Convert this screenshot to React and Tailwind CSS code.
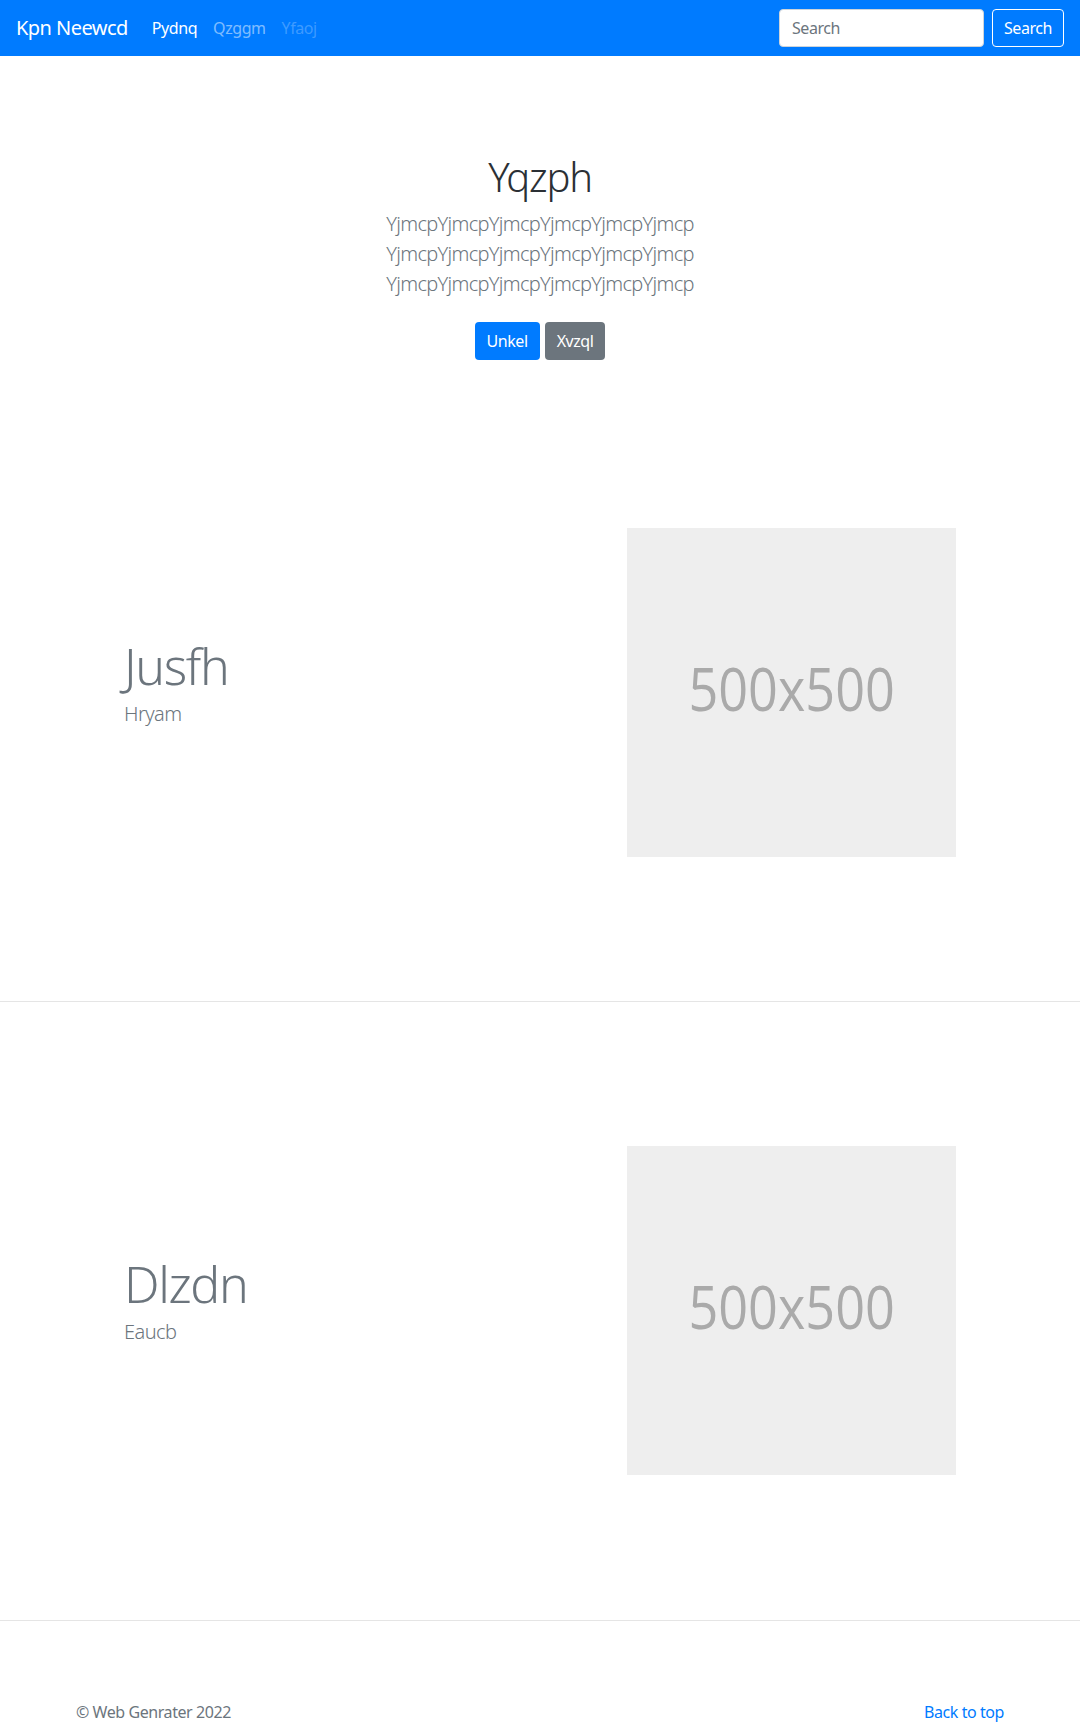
export default function App() {
  const font = { fontFamily: '"Noto Sans", "Open Sans", Arial, sans-serif' };
  return (
    <div className="bg-white text-[#212529] text-[16px] leading-[24px] w-[1080px]" style={font}>
      <nav className="h-[56px] bg-[#007bff] flex items-center px-[16px]">
        <a className="text-white text-[20px] leading-[30px] mr-[16px] tracking-[-0.027em]">Kpn Neewcd</a>
        <div className="flex">
          <a className="px-[8px] text-white tracking-[-0.027em]">Pydnq</a>
          <a className="px-[8px] text-white/50 tracking-[-0.027em]">Qzggm</a>
          <a className="px-[8px] text-white/25 tracking-[-0.027em]">Yfaoj</a>
        </div>
        <div className="ml-auto flex items-center">
          <input
            placeholder="Search"
            className="w-[205px] h-[38px] bg-white rounded-[4px] border border-[#ced4da] px-[12px] text-[16px] tracking-[-0.027em] placeholder:text-[#6c757d] mr-[8px] outline-none"
          />
          <button className="h-[38px] w-[72px] border border-white rounded-[4px] text-white text-[16px] tracking-[-0.027em]">Search</button>
        </div>
      </nav>

      <section className="pt-[97px] pb-[23px] text-center">
        <h1 className="text-[40px] leading-[48px] font-light mb-[8px] text-[#2b3035] tracking-[-0.03em]">Yqzph</h1>
        <p className="text-[20px] leading-[30px] font-light text-[#6c757d] mb-[8px] tracking-[-0.035em]">
          YjmcpYjmcpYjmcpYjmcpYjmcpYjmcp
          <br />
          YjmcpYjmcpYjmcpYjmcpYjmcpYjmcp
          <br />
          YjmcpYjmcpYjmcpYjmcpYjmcpYjmcp
        </p>
        <div className="flex justify-center gap-[5px] pt-[15px]">
          <button className="h-[38px] px-[12px] rounded-[4px] bg-[#007bff] text-white tracking-[-0.027em]">Unkel</button>
          <button className="h-[38px] px-[12px] rounded-[4px] bg-[#6c757d] text-white tracking-[-0.027em]">Xvzql</button>
        </div>
      </section>

      <Featurette title="Jusfh" sub="Hryam" pt="pt-[145px]" pb="pb-[144px]" />
      <hr className="border-0 border-t border-[#e5e5e5] m-0" />
      <Featurette title="Dlzdn" sub="Eaucb" pt="pt-[144px]" pb="pb-[145px]" />
      <hr className="border-0 border-t border-[#e5e5e5] m-0" />

      <footer className="pt-[79px] pb-[16px] px-[76px] flex justify-between text-[16px] leading-[24px]">
        <p className="text-[#6c757d] tracking-[-0.027em]">© Web Genrater 2022</p>
        <a className="text-[#007bff] tracking-[-0.027em]">Back to top</a>
      </footer>
    </div>
  );
}

function Featurette({ title, sub, pt, pb }) {
  return (
    <div className={`${pt} ${pb} pl-[124px] pr-[124px] flex items-center justify-between`}>
      <div>
        <h2 className="text-[50px] leading-[50px] font-light text-[#6c757d] mb-[8px] tracking-[-0.027em]">{title}</h2>
        <p className="text-[20px] leading-[30px] font-light text-[#6c757d] mb-[16px] tracking-[-0.027em]">{sub}</p>
      </div>
      <div className="w-[329px] h-[329px] bg-[#eeeeee] flex items-center justify-center">
        <span className="text-[60px] leading-[60px] text-[#aaaaaa] scale-x-[0.87] inline-block mb-[9px]" style={{ fontFamily: '"Open Sans", sans-serif' }}>500x500</span>
      </div>
    </div>
  );
}
